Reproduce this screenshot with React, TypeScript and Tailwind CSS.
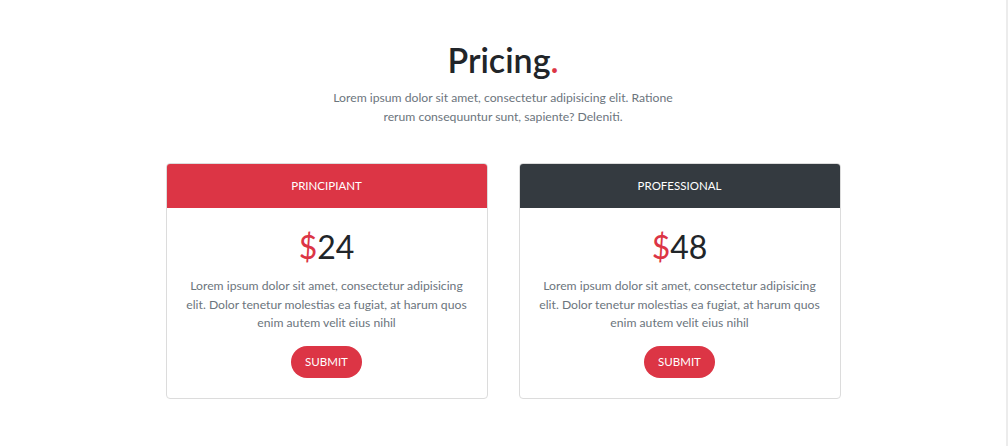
import React from "react";

type Plan = {
  name: string;
  price: string;
  headerClass: string;
};

const plans: Plan[] = [
  { name: "Principiant", price: "24", headerClass: "bg-[#dc3545]" },
  { name: "Professional", price: "48", headerClass: "bg-[#343a40]" },
];

const body =
  "Lorem ipsum dolor sit amet, consectetur adipisicing elit. Dolor tenetur molestias ea fugiat, at harum quos enim autem velit eius nihil";

const PricingCard = ({ plan }: { plan: Plan }) => {
  return (
    <div className="w-[322px] rounded-[4px] border border-[#dcdcdc] overflow-hidden bg-white">
      <div
        className={`h-[44px] flex items-center justify-center text-white text-[11.5px] uppercase ${plan.headerClass}`}
      >
        {plan.name}
      </div>
      <div className="flex flex-col items-center px-[17px] pt-[15px] pb-[20px]">
        <h2 className="text-[32px] leading-[48px] text-[#212529]">
          <span className="text-[#dc3545]">$</span>
          {plan.price}
        </h2>
        <p className="mt-[6px] text-[12.2px] leading-[18.5px] text-[#6c757d] text-center">
          {body}
        </p>
        <button className="mt-[13px] h-[32px] px-[14px] rounded-full bg-[#dc3545] text-white text-[11.5px] uppercase">
          Submit
        </button>
      </div>
    </div>
  );
};

const App = () => {
  return (
    <div
      className="flex w-[1008px] h-[446px] bg-white"
      style={{ fontFamily: 'Lato, "Open Sans", sans-serif' }}
    >
      <div className="flex-1 flex flex-col items-center pt-[38px]">
        <h1 className="text-[34px] leading-[44px] font-semibold text-[#212529]">
          Pricing<span className="text-[#dc3545]">.</span>
        </h1>
        <p className="mt-[6px] w-[360px] text-[12.2px] leading-[19px] text-[#6c757d] text-center">
          Lorem ipsum dolor sit amet, consectetur adipisicing elit. Ratione rerum
          consequuntur sunt, sapiente? Deleniti.
        </p>
        <div className="mt-[37px] flex gap-[31px]">
          {plans.map((plan: Plan, index: number) => (
            <PricingCard plan={plan} key={index + "plan"} />
          ))}
        </div>
      </div>
      <div className="w-[2px] bg-[#ececec]" />
    </div>
  );
};

export default App;
